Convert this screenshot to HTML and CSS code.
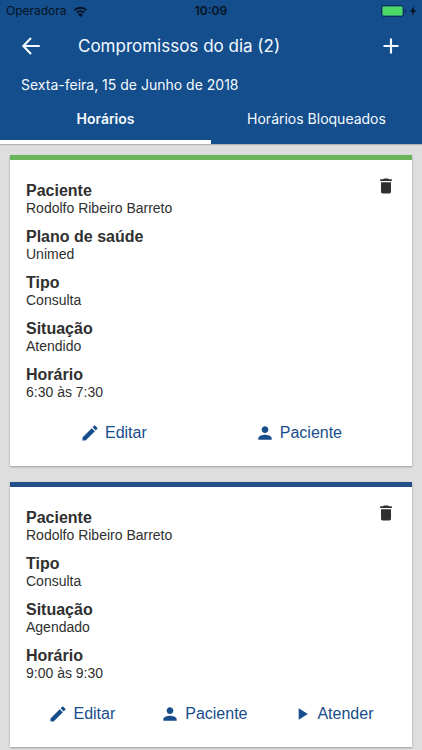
FILE: index.html
```html
<!DOCTYPE html>
<html lang="pt-BR">
<head>
<meta charset="utf-8">
<meta name="viewport" content="width=device-width, initial-scale=1">
<title>Compromissos do dia</title>
<link rel="stylesheet" href="styles.css">
</head>
<body>
<svg class="sprite" aria-hidden="true">
  <symbol id="trash" viewBox="0 0 24 24"><path d="M6 19c0 1.100.9 2 2 2h8c1.100 0 2-.9 2-2V7.500H6V19zM19 4h-3.500l-1-1h-5l-1 1H5v2h14V4z"/></symbol>
  <symbol id="pencil" viewBox="0 0 24 24"><path d="M3 17.250V21h3.750L17.810 9.940l-3.750-3.750L3 17.250zM20.710 7.040c.39-.39.39-1.020 0-1.410l-2.340-2.340c-.39-.39-1.020-.39-1.410 0l-1.830 1.830 3.750 3.750 1.830-1.830z"/></symbol>
  <symbol id="person" viewBox="0 0 24 24"><path d="M12 12c2.210 0 4-1.790 4-4s-1.790-4-4-4-4 1.790-4 4 1.790 4 4 4zm0 2c-2.670 0-8 1.340-8 4v2h16v-2c0-2.660-5.330-4-8-4z"/></symbol>
  <symbol id="play" viewBox="0 0 24 24"><path d="M8 5v14l11-7z"/></symbol>
</svg>
<header class="header">
  <div class="status">
    <div class="carrier">
      <span>Operadora</span>
      <svg class="wifi" viewBox="0 0 16 12" aria-hidden="true"><path d="M1.500 4.500a9.500 9.500 0 0 1 13 0M4 7.200a6 6 0 0 1 8 0" fill="none" stroke="currentColor" stroke-width="2.200"/><path d="M8 12 5.400 9.300a3.700 3.700 0 0 1 5.200 0z"/></svg>
    </div>
    <time class="clock">10:09</time>
    <div class="power">
      <svg class="battery" viewBox="0 0 26 12" aria-hidden="true"><rect x=".5" y=".5" width="22" height="11" rx="2.500" fill="none" stroke="#0b2f57"/><rect x="1.500" y="1.500" width="20" height="9" rx="1" fill="#4cd964"/><path d="M24 4v4q1.500-.5 1.500-2T24 4z" fill="#0b2f57"/></svg>
      <svg class="bolt" viewBox="0 0 6 10" aria-hidden="true"><path d="M4 0 0 6h2.500L2 10l4-6H3.500z"/></svg>
    </div>
  </div>
  <div class="bar">
    <button class="icon-button" type="button" aria-label="Voltar"><svg viewBox="0 0 24 24" aria-hidden="true"><path d="M22.500 12H4M12 2.500 2.800 12l9.200 9.500" fill="none" stroke="currentColor" stroke-width="2.600"/></svg></button>
    <h1 class="title">Compromissos do dia (2)</h1>
    <button class="icon-button" type="button" aria-label="Adicionar"><svg viewBox="0 0 24 24" aria-hidden="true"><path d="M12 3v18M3 12h18" fill="none" stroke="currentColor" stroke-width="2.600"/></svg></button>
  </div>
  <p class="date">Sexta-feira, 15 de Junho de 2018</p>
  <nav class="tabs">
    <a class="tab active" href="#horarios" aria-current="page">Horários</a>
    <a class="tab" href="#bloqueados">Horários Bloqueados</a>
  </nav>
</header>
<main class="list" id="horarios">
  <article class="card done">
    <button class="delete" type="button" aria-label="Excluir"><svg aria-hidden="true"><use href="#trash"/></svg></button>
    <dl class="fields">
      <div><dt>Paciente</dt><dd>Rodolfo Ribeiro Barreto</dd></div>
      <div><dt>Plano de saúde</dt><dd>Unimed</dd></div>
      <div><dt>Tipo</dt><dd>Consulta</dd></div>
      <div><dt>Situação</dt><dd>Atendido</dd></div>
      <div><dt>Horário</dt><dd>6:30 às 7:30</dd></div>
    </dl>
    <div class="actions">
      <button class="action" type="button"><svg aria-hidden="true"><use href="#pencil"/></svg>Editar</button>
      <button class="action" type="button"><svg aria-hidden="true"><use href="#person"/></svg>Paciente</button>
    </div>
  </article>
  <article class="card">
    <button class="delete" type="button" aria-label="Excluir"><svg aria-hidden="true"><use href="#trash"/></svg></button>
    <dl class="fields">
      <div><dt>Paciente</dt><dd>Rodolfo Ribeiro Barreto</dd></div>
      <div><dt>Tipo</dt><dd>Consulta</dd></div>
      <div><dt>Situação</dt><dd>Agendado</dd></div>
      <div><dt>Horário</dt><dd>9:00 às 9:30</dd></div>
    </dl>
    <div class="actions">
      <button class="action" type="button"><svg aria-hidden="true"><use href="#pencil"/></svg>Editar</button>
      <button class="action" type="button"><svg aria-hidden="true"><use href="#person"/></svg>Paciente</button>
      <button class="action" type="button"><svg aria-hidden="true"><use href="#play"/></svg>Atender</button>
    </div>
  </article>
</main>
</body>
</html>
```
FILE: styles.css
```css
* { box-sizing: border-box; }
body {
  margin: 0;
  background: #dedede;
  color: #303030;
  font-family: "Liberation Sans", Arial, sans-serif;
}
svg { display: block; fill: currentColor; }
button {
  border: 0;
  padding: 0;
  background: none;
  color: inherit;
  font: inherit;
  cursor: pointer;
}
h1, p, dl, dd { margin: 0; }
.sprite { position: absolute; width: 0; height: 0; }

.header {
  background: #144e8c;
  color: #f4faff;
  box-shadow: 0 1px 1px rgba(0, 0, 0, .2);
}
.status {
  display: grid;
  grid-template-columns: 1fr auto 1fr;
  align-items: center;
  height: 22px;
  padding: 0 6px;
  color: #071322;
  font: 12px/22px Inter, sans-serif;
}
.carrier { display: flex; align-items: center; gap: 6px; }
.wifi { width: 15px; height: 11px; }
.clock { font-weight: 600; }
.power { display: flex; align-items: center; justify-content: flex-end; gap: 3px; }
.battery { width: 26px; height: 12px; }
.bolt { width: 6px; height: 10px; }

.bar {
  display: flex;
  align-items: center;
  height: 48px;
  padding: 0 21px;
}
.icon-button svg { width: 20px; height: 20px; }
.title {
  flex: 1;
  padding-left: 37px;
  font: 400 17px/24px Inter, sans-serif;
}
.date {
  padding: 5px 21px 0;
  font: 14px/20px Inter, sans-serif;
}
.tabs { display: grid; grid-template-columns: 1fr 1fr; }
.tab {
  height: 49px;
  padding-top: 14px;
  border-bottom: 4px solid transparent;
  color: inherit;
  font: 14px/20px Inter, sans-serif;
  text-align: center;
  text-decoration: none;
}
.active { border-color: #fff; font-weight: 600; }

.list {
  display: grid;
  gap: 16px;
  padding: 11px 10px 2px;
}
.card {
  position: relative;
  padding: 22px 16px 21px;
  border-top: 5px solid #234e87;
  background: #fff;
  box-shadow: 0 1px 2px rgba(0, 0, 0, .3);
}
.done { border-color: #6ab45c; }
.delete { position: absolute; top: 16px; right: 16px; }
.delete svg { width: 20px; height: 20px; }
.fields { display: grid; gap: 11px; }
dt { font-size: 16px; font-weight: 700; line-height: 18px; }
dd { font-size: 14px; line-height: 17px; }
.actions {
  display: flex;
  justify-content: space-around;
  margin-top: 20px;
  color: #174d8a;
}
.action {
  display: flex;
  align-items: center;
  gap: 5px;
  font-size: 16px;
  line-height: 24px;
}
.action svg { width: 20px; height: 20px; }
```
